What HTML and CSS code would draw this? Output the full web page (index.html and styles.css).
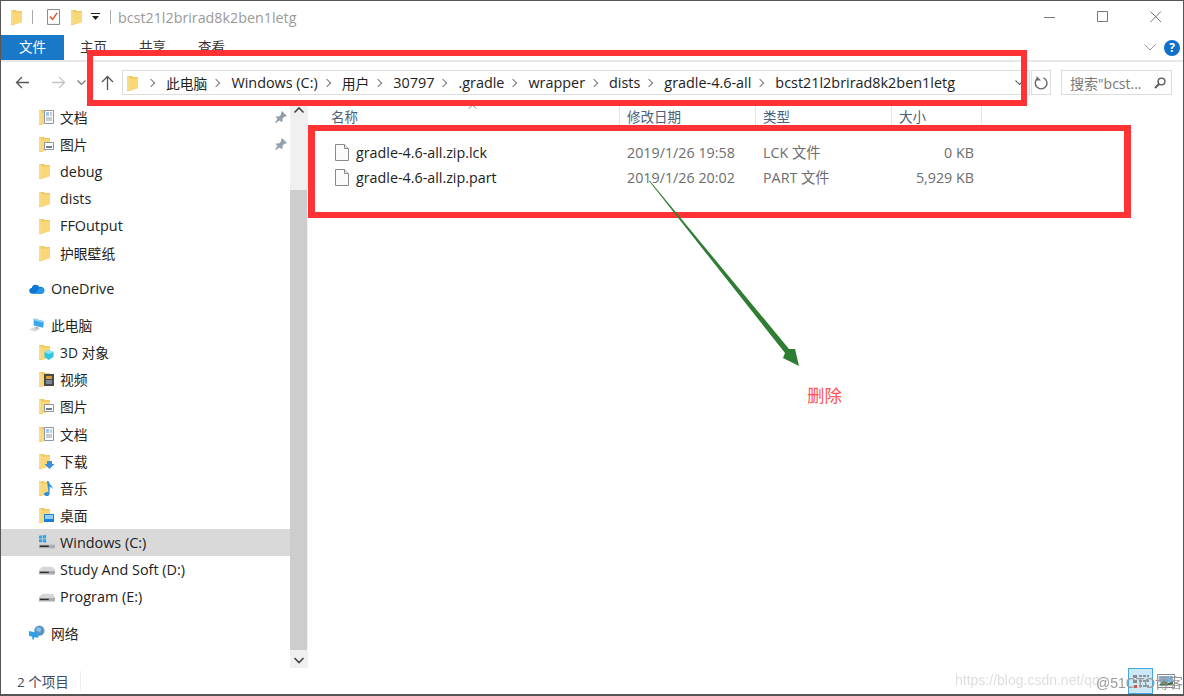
FILE: index.html
```html
<!DOCTYPE html>
<html lang="zh-CN">
<head>
<meta charset="utf-8">
<title>bcst21l2brirad8k2ben1letg</title>
<link rel="stylesheet" href="styles.css">
</head>
<body>
<svg class="defs" width="0" height="0" aria-hidden="true">
  <symbol id="folder" viewBox="0 0 16 16">
    <path fill="#f3c962" d="M0 1h5l1 1h5v11L2 16H0z"/>
    <path fill="#fbd877" d="M2 3.500h9V13l-9 3z"/>
    <path fill="#fff3c4" d="M0 1.500h2V15H0z" opacity=".45"/>
  </symbol>
  <symbol id="f-doc" viewBox="0 0 16 16">
    <use href="#folder"/>
    <path fill="#fff" stroke="#8c97a3" d="M5.500 1.500h9v13h-9z"/>
    <path stroke="#3d8fdc" d="M7 4h3M7 6h3"/>
    <path stroke="#8c97a3" d="M11 4h2M11 6h2M7 9h6M7 11h6"/>
  </symbol>
  <symbol id="f-pic" viewBox="0 0 16 16">
    <use href="#folder"/>
    <path fill="#fff" stroke="#8c97a3" d="M5.500 6.500h9v7h-9z"/>
    <path fill="#6d7f92" d="M7 10h6v2H7z"/>
  </symbol>
  <symbol id="f-3d" viewBox="0 0 16 16">
    <use href="#folder"/>
    <path fill="#2fc3e6" d="M9.500 6l5 2v5l-5 3-4-3V8z"/>
    <path fill="#8ce4f4" d="M9.500 6l5 2-5 2-4-2z"/>
  </symbol>
  <symbol id="f-video" viewBox="0 0 16 16">
    <use href="#folder"/>
    <path fill="#4a4a4a" d="M5 3h10v12H5z"/>
    <path fill="#d99a3c" d="M7 5h6v3H7z"/>
    <path fill="#7d8a96" d="M7 9h6v4H7z"/>
  </symbol>
  <symbol id="f-down" viewBox="0 0 16 16">
    <use href="#folder"/>
    <path fill="#3b8fdc" d="M8 8h5v3h2.500l-5 5-5-5H8z"/>
  </symbol>
  <symbol id="f-music" viewBox="0 0 16 16">
    <use href="#folder"/>
    <path fill="#2b8fe0" d="M8 1h1.500c.5 4 4 4 4.500 8-1-1.500-2.500-2-3.500-2.500V14c0 1.500-1.500 2-3 2s-2.500-1-2.500-2 1.500-2 3-2c.5 0 1 0 1.500.2z"/>
  </symbol>
  <symbol id="f-desk" viewBox="0 0 16 16">
    <use href="#folder"/>
    <path fill="#1b7fd6" d="M5 7h10v8H5z"/>
    <path fill="#8fd0f7" d="M6 8h8v4H6z"/>
  </symbol>
  <symbol id="drive" viewBox="0 0 18 10">
    <path fill="#d4d6d8" d="M4 0h11l3 4v3H0V4z"/>
    <path fill="#a9acaf" d="M0 5h18v4H0z"/>
    <path fill="#2f2f2f" d="M1 6h10v1.500H1z"/>
  </symbol>
  <symbol id="file" viewBox="0 0 14 17">
    <path fill="#fbfbfb" stroke="#8a8a8a" d="M.5.5h9l4 4v12H.5z"/>
    <path fill="#e8e8e8" stroke="#8a8a8a" d="M9.500.5v4h4"/>
  </symbol>
  <symbol id="pin" viewBox="0 0 12 12">
    <path fill="#93a0ab" d="M7 0l5 5-1.500.8-.8-.3-2.200 2.200.2 2.300-1 1L4.200 9.500 1 12l-1-.2L2.500 7.800.7 6.300l1-1 2.300.2 2.200-2.200-.3-.8z"/>
  </symbol>
</svg>

<div class="window">
  <header class="titlebar">
    <svg class="tb-folder"><use href="#folder"/></svg>
    <span class="tb-sep"></span>
    <svg class="tb-check" viewBox="0 0 14 17">
      <path fill="#fff" stroke="#7d7d7d" d="M.5.5h13v16H.5z"/>
      <path fill="none" stroke="#e2552b" stroke-width="1.600" d="M3 8l3 3 5-7"/>
    </svg>
    <svg class="tb-folder tb-folder-2"><use href="#folder"/></svg>
    <svg class="tb-drop" viewBox="0 0 9 8">
      <path fill="#222" d="M0 0h9v1H0zM1 3h7L4.500 7z"/>
    </svg>
    <span class="tb-sep tb-sep-2"></span>
    <span class="tb-title">bcst21l2brirad8k2ben1letg</span>
    <div class="win-controls">
      <svg viewBox="0 0 12 12"><path stroke="#777" d="M0 6.500h11"/></svg>
      <svg viewBox="0 0 12 12"><path fill="none" stroke="#777" d="M.5.5h10v10H.5z"/></svg>
      <svg viewBox="0 0 12 12"><path stroke="#777" d="M.5.5l10.500 10.500M11 .5L.5 11"/></svg>
    </div>
  </header>

  <nav class="ribbon">
    <span class="tab tab-file">文件</span>
    <span class="tab">主页</span>
    <span class="tab">共享</span>
    <span class="tab">查看</span>
    <svg class="rb-chevron" viewBox="0 0 12 7"><path fill="none" stroke="#999" d="M.5.5L6 6 11.500.5"/></svg>
    <span class="help">?</span>
  </nav>

  <div class="navbar">
    <svg class="nb-icon nb-back" viewBox="0 0 15 13"><path fill="none" stroke="#555" stroke-width="1.300" d="M14 6.500H1.500M7 1L1.500 6.500 7 12"/></svg>
    <svg class="nb-icon nb-forward" viewBox="0 0 15 13"><path fill="none" stroke="#c4c4c4" stroke-width="1.300" d="M1 6.500h12.500M8 1l5.500 5.500L8 12"/></svg>
    <svg class="nb-down" viewBox="0 0 9 6"><path fill="none" stroke="#777" stroke-width="1.200" d="M.5.5l4 4 4-4"/></svg>
    <svg class="nb-up" viewBox="0 0 13 15"><path fill="none" stroke="#555" stroke-width="1.300" d="M6.500 15V1.500M1 7l5.500-5.500L12 7"/></svg>
    <div class="address">
      <svg class="ad-folder"><use href="#folder"/></svg>
      <span class="crumb-sep"></span><span class="cjk">此电脑</span>
      <span class="crumb-sep"></span><span>Windows (C:)</span>
      <span class="crumb-sep"></span><span class="cjk">用户</span>
      <span class="crumb-sep"></span><span>30797</span>
      <span class="crumb-sep"></span><span>.gradle</span>
      <span class="crumb-sep"></span><span>wrapper</span>
      <span class="crumb-sep"></span><span>dists</span>
      <span class="crumb-sep"></span><span>gradle-4.6-all</span>
      <span class="crumb-sep"></span><span>bcst21l2brirad8k2ben1letg</span>
      <svg class="ad-drop" viewBox="0 0 9 6"><path fill="none" stroke="#666" stroke-width="1.200" d="M.5.5l4 4 4-4"/></svg>
    </div>
    <div class="refresh">
      <svg viewBox="0 0 14 14"><path fill="none" stroke="#666" stroke-width="1.400" d="M4 2.200A5.800 5.800 0 1 0 9.500 1.800"/><path fill="#666" d="M2.500 0v4.500H7z"/></svg>
    </div>
    <div class="search">
      <span>搜索"bcst...</span>
      <svg viewBox="0 0 12 12"><circle cx="7.500" cy="4.500" r="3.400" fill="none" stroke="#555" stroke-width="1.400"/><path stroke="#555" stroke-width="1.800" d="M5 7l-4 4"/></svg>
    </div>
  </div>

  <div class="main">
    <aside class="sidebar">
      <div class="tree">
        <div class="row l2"><svg class="ico"><use href="#f-doc"/></svg><span class="cjk">文档</span><svg class="pin"><use href="#pin"/></svg></div>
        <div class="row l2"><svg class="ico"><use href="#f-pic"/></svg><span class="cjk">图片</span><svg class="pin"><use href="#pin"/></svg></div>
        <div class="row l2"><svg class="ico"><use href="#folder"/></svg><span>debug</span></div>
        <div class="row l2"><svg class="ico"><use href="#folder"/></svg><span>dists</span></div>
        <div class="row l2"><svg class="ico"><use href="#folder"/></svg><span>FFOutput</span></div>
        <div class="row l2"><svg class="ico"><use href="#folder"/></svg><span class="cjk">护眼壁纸</span></div>

        <div class="row l1 group"><svg class="ico" viewBox="0 0 17 16"><path fill="#0f78d4" d="M3.500 13a3 3 0 0 1-.5-6 4 4 0 0 1 3.500-3.500A4.500 4.500 0 0 1 11 6a3.500 3.500 0 0 1 2.500 7z"/><path fill="#2b93e6" d="M7 13l3-5 3-1.500a3.300 3.300 0 0 1 3.500 3.300c0 1.700-1.300 3.200-3 3.200z"/></svg><span>OneDrive</span></div>

        <div class="row l1 group"><svg class="ico" viewBox="0 0 17 16"><path fill="#3aa4ec" d="M5 1l11 3-1 7-10-2.500z"/><path fill="#8fd0f7" d="M5 1l11 3-.5 2L5 3z"/><path fill="#d4d7da" d="M0 13l6-3 6 2-5 3z"/><path fill="#aeb2b5" d="M7 10h3v2H7z"/></svg><span class="cjk">此电脑</span></div>
        <div class="row l2"><svg class="ico"><use href="#f-3d"/></svg><span class="cjk">3D 对象</span></div>
        <div class="row l2"><svg class="ico"><use href="#f-video"/></svg><span class="cjk">视频</span></div>
        <div class="row l2"><svg class="ico"><use href="#f-pic"/></svg><span class="cjk">图片</span></div>
        <div class="row l2"><svg class="ico"><use href="#f-doc"/></svg><span class="cjk">文档</span></div>
        <div class="row l2"><svg class="ico"><use href="#f-down"/></svg><span class="cjk">下载</span></div>
        <div class="row l2"><svg class="ico"><use href="#f-music"/></svg><span class="cjk">音乐</span></div>
        <div class="row l2"><svg class="ico"><use href="#f-desk"/></svg><span class="cjk">桌面</span></div>
        <div class="row l2 selected">
          <svg class="ico" viewBox="0 0 18 16"><use href="#drive" y="6" width="18" height="10"/><path fill="#2da5e8" d="M0 1l3.500-.5V4H0zM4.300.4L8 0v4H4.300zM0 4.800h3.500v3.500L0 8zM4.300 4.800H8v4l-3.700-.5z"/></svg>
          <span>Windows (C:)</span>
        </div>
        <div class="row l2"><svg class="ico" viewBox="0 0 18 16"><use href="#drive" y="4" width="18" height="10"/></svg><span>Study And Soft (D:)</span></div>
        <div class="row l2"><svg class="ico" viewBox="0 0 18 16"><use href="#drive" y="4" width="18" height="10"/></svg><span>Program (E:)</span></div>

        <div class="row l1 group"><svg class="ico" viewBox="0 0 17 16"><circle cx="11" cy="5.500" r="5.500" fill="#5a96c4"/><path fill="#8cc4e8" d="M8 2l5 1-1 4-4-1z"/><path fill="#2f9fe8" d="M0 6l10 2v5l-4.500-.5-.5 2.500-1.500-.2V12L0 11z"/></svg><span class="cjk">网络</span></div>
      </div>
      <div class="scrollbar">
        <svg class="sb-btn" viewBox="0 0 18 16"><path fill="none" stroke="#444" stroke-width="1.600" d="M4.500 9.500L9 5l4.500 4.500"/></svg>
        <div class="sb-track"><div class="sb-thumb"></div></div>
        <svg class="sb-btn" viewBox="0 0 18 16"><path fill="none" stroke="#444" stroke-width="1.600" d="M4.500 6L9 10.500 13.500 6"/></svg>
      </div>
    </aside>

    <section class="files">
      <div class="cols head">
        <span class="c-name">名称</span>
        <span>修改日期</span>
        <span>类型</span>
        <span>大小</span>
        <svg class="sort-caret" viewBox="0 0 9 4"><path fill="none" stroke="#999" d="M.5 3.500L4.500.5l4 3"/></svg>
      </div>
      <div class="cols file-row">
        <span class="c-name c-file"><svg class="file-ico"><use href="#file"/></svg>gradle-4.6-all.zip.lck</span>
        <span>2019/1/26 19:58</span>
        <span>LCK 文件</span>
        <span class="c-size">0 KB</span>
      </div>
      <div class="cols file-row">
        <span class="c-name c-file"><svg class="file-ico"><use href="#file"/></svg>gradle-4.6-all.zip.part</span>
        <span>2019/1/26 20:02</span>
        <span>PART 文件</span>
        <span class="c-size">5,929 KB</span>
      </div>
    </section>
  </div>

  <footer class="status">
    <span class="count">2 个项目</span>
    <div class="views">
      <span class="view active">
        <svg viewBox="0 0 18 16"><path fill="#8a8a8a" d="M1 2h4v3H1zM1 7h4v3H1z"/><path fill="#d9483b" d="M2 12h3v3H2z"/><path stroke="#444" d="M7 3h10M7 8h10M7 13h10" stroke-dasharray="3 1"/></svg>
      </span>
      <span class="view">
        <svg viewBox="0 0 18 16"><path fill="#fff" stroke="#888" d="M.5 1.500h17v13H.5z"/><path fill="#7bb3dc" d="M2 3h14v6H2z"/><path fill="#3f6d4a" d="M2 12l5-5 4 3 5-2v4H2z"/></svg>
      </span>
    </div>
  </footer>

  <div class="mark mark-1"></div>
  <div class="mark mark-2"></div>
  <svg class="arrow" viewBox="0 0 1184 696">
    <polygon fill="#2e7d32" points="649,181 650,181 789,349 795,349 799,366 783,358 785,353"/>
  </svg>
  <span class="delete-note">删除</span>
  <span class="watermark">https://blog.csdn.net/qq</span>
  <span class="watermark-2">@51CTO博客</span>
</div>
</body>
</html>
```

FILE: styles.css
```css
* { box-sizing: border-box; }

html, body {
  margin: 0;
  padding: 0;
  background: #fff;
}

body {
  font-family: "Open Sans", "Noto Sans CJK SC", sans-serif;
  font-size: 14.4px;
  color: #222;
  overflow: hidden;
}

.defs { position: absolute; }

svg { display: block; flex: none; }

.cjk { font-size: 13.8px; }

.window {
  position: relative;
  width: 1184px;
  height: 696px;
  display: flex;
  flex-direction: column;
  background: #fff;
  border-top: 1px solid #555;
  border-left: 1px solid #5a5552;
  border-right: 1px solid #555;
  border-bottom: 2px solid #555;
  overflow: hidden;
}

/* Title bar */
.titlebar {
  height: 32px;
  display: flex;
  align-items: center;
  padding-left: 10px;
}
.tb-folder { width: 16px; height: 16px; margin-right: -4px; }
.tb-folder-2 { margin-left: 11px; }
.tb-sep { width: 1px; height: 14px; background: #aaa; margin-left: 9px; }
.tb-sep-2 { margin-left: 10px; }
.tb-check { width: 13px; height: 16px; margin-left: 14px; }
.tb-drop { width: 9px; height: 8px; margin-left: 8px; }
.tb-title {
  margin-left: 7px;
  font-size: 14.3px;
  color: #9a9a9a;
}
.win-controls {
  margin-left: auto;
  display: flex;
  gap: 41px;
  padding-right: 21px;
}
.win-controls svg { width: 12px; height: 12px; }

/* Ribbon tabs */
.ribbon {
  height: 29px;
  display: flex;
  align-items: flex-start;
  padding-top: 2px;
  border-bottom: 2px solid #e8e8e8;
}
.tab {
  width: 59px;
  height: 25px;
  line-height: 25px;
  text-align: center;
  font-size: 13.5px;
  color: #333;
}
.tab-file {
  width: 63px;
  background: #1a78c9;
  color: #fff;
}
.rb-chevron { width: 12px; height: 7px; margin: 9px 0 0 auto; }
.help {
  width: 16px;
  height: 16px;
  margin: 5px 3px 0 8px;
  border-radius: 50%;
  background: #0f70cc;
  color: #fff;
  font-size: 12px;
  font-weight: 700;
  line-height: 16px;
  text-align: center;
}

/* Navigation bar */
.navbar {
  height: 41px;
  display: flex;
  align-items: center;
}
.nb-icon { width: 15px; height: 13px; }
.nb-back { margin-left: 14px; }
.nb-forward { margin-left: 21px; }
.nb-down { width: 9px; height: 6px; margin-left: 11px; }
.nb-up { width: 13px; height: 15px; margin-left: 15px; }
.address {
  width: 908px;
  height: 25px;
  margin-left: 8px;
  display: flex;
  align-items: center;
  padding-left: 4px;
  border: 1px solid #dcdcdc;
  white-space: nowrap;
}
.ad-folder { width: 16px; height: 16px; margin-right: -1px; }
.ad-drop { width: 9px; height: 6px; margin-left: auto; margin-right: 5px; }
.crumb-sep {
  width: 6px;
  height: 6px;
  margin: 0 12px 0 6px;
  border-top: 1px solid #777;
  border-right: 1px solid #777;
  transform: rotate(45deg);
}
.refresh {
  width: 20px;
  height: 25px;
  margin-left: 1px;
  border: 1px solid #dcdcdc;
  display: flex;
  align-items: center;
  justify-content: center;
}
.refresh svg { width: 14px; height: 14px; }
.search {
  width: 111px;
  height: 25px;
  margin-left: 10px;
  border: 1px solid #dcdcdc;
  display: flex;
  align-items: center;
  justify-content: space-between;
  padding: 0 5px 0 8px;
  font-size: 14px;
  color: #777;
}
.search svg { width: 12px; height: 12px; }

/* Main area */
.main {
  flex: 1;
  min-height: 0;
  display: flex;
}

.sidebar {
  width: 307px;
  display: flex;
}
.tree {
  width: 289px;
  padding-top: .4px;
}
.row {
  height: 27.2px;
  display: flex;
  align-items: center;
  white-space: nowrap;
}
.row.l2 { padding-left: 38px; }
.row.l1 { padding-left: 28px; }
.row.group { margin-top: 8.8px; }
.row.selected { background: #d9d9d9; }
.ico { width: 16px; height: 16px; margin-right: 5px; }
.row.l1 .ico { margin-right: 6px; }
.pin { width: 12px; height: 12px; margin-left: auto; margin-right: 3px; }

.scrollbar {
  width: 18px;
  display: flex;
  flex-direction: column;
  background: #f0f0f0;
}
.sb-btn { width: 18px; height: 16px; }
.sb-track { flex: 1; padding-top: 71px; }
.sb-thumb { width: 17px; height: 460px; background: #cdcdcd; }

/* File list */
.files {
  flex: 1;
  padding-top: 3px;
}
.cols {
  display: grid;
  grid-template-columns: 312px 136px 136px 90px;
}
.cols > span { padding-left: 7px; white-space: nowrap; }
.head {
  position: relative;
  height: 23px;
  font-size: 13.5px;
  line-height: 22px;
  color: #4c607a;
}
.head > span { border-right: 1px solid #e5e5e5; }
.head > .c-name { padding-left: 23px; }
.sort-caret {
  position: absolute;
  left: 160px;
  top: -1px;
  width: 9px;
  height: 4px;
}
.file-row {
  height: 25px;
  align-items: center;
  color: #6d6d6d;
  font-size: 14.3px;
  line-height: 20px;
}
.head + .file-row { margin-top: 11px; }
.file-row > .c-file {
  display: flex;
  align-items: center;
  gap: 7px;
  padding-left: 27px;
  color: #222;
}
.file-ico { width: 14px; height: 17px; }
.file-row > .c-size { text-align: right; padding-right: 8px; }

/* Status bar */
.status {
  height: 26px;
  display: flex;
  align-items: center;
  justify-content: space-between;
  padding-left: 16px;
  font-size: 13.5px;
  color: #3c4c60;
}
.count {
  width: 64px;
  border-right: 1px solid #eee;
}
.views { display: flex; align-items: center; padding-right: 5px; }
.view {
  width: 25px;
  height: 26px;
  display: flex;
  align-items: center;
  justify-content: center;
  border: 1px solid transparent;
}
.view.active { background: #cce8f7; border-color: #3fa9e0; }
.view svg { width: 18px; height: 16px; }

/* Overlay annotations */
.mark {
  position: absolute;
  border: 6px solid #ff3333;
  pointer-events: none;
}
.mark-1 { left: 86px; top: 49px; width: 940px; height: 56px; }
.mark-2 { left: 307px; top: 124px; width: 823px; height: 93px; border-width: 6px 7px; }
.arrow {
  position: absolute;
  left: -1px;
  top: -1px;
  width: 1184px;
  height: 696px;
  pointer-events: none;
}
.delete-note {
  position: absolute;
  left: 806px;
  top: 381px;
  font-size: 17.5px;
  color: #f55;
}
.watermark, .watermark-2 {
  position: absolute;
  top: 671px;
  font-family: "Liberation Sans", sans-serif;
  font-size: 14px;
  white-space: nowrap;
  filter: blur(.5px);
}
.watermark { left: 954px; color: #dedede; }
.watermark-2 {
  left: 1095px;
  color: #9a9a9a;
  font-family: "Liberation Sans", "Noto Sans CJK SC", sans-serif;
}
```
